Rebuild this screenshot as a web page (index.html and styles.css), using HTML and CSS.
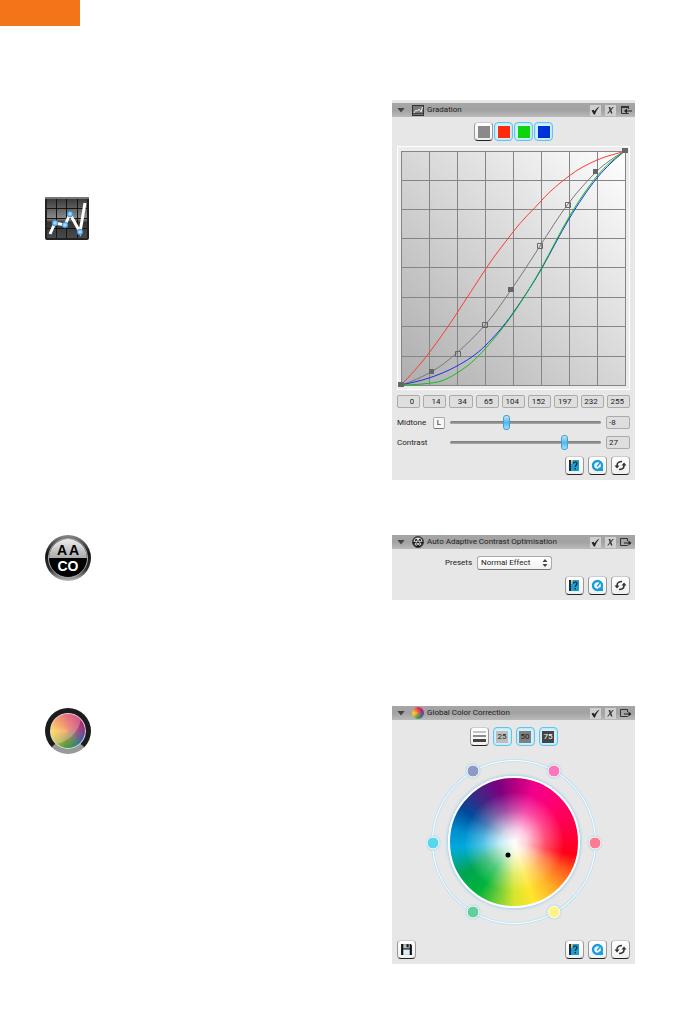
FILE: index.html
```html
<!DOCTYPE html>
<html lang="en">
<head>
<meta charset="UTF-8">
<meta name="viewport" content="width=device-width, initial-scale=1.0">
<title>Image Tools</title>
<link rel="stylesheet" href="styles.css">
</head>
<body>
<!-- shared icons -->
<svg class="sprite" aria-hidden="true">
    <defs>
        <linearGradient id="dark" x1="0" y1="0" x2="0" y2="1">
            <stop offset="0" stop-color="#3a3a3a"/>
            <stop offset=".5" stop-color="#8a8a8a"/>
            <stop offset=".6" stop-color="#333"/>
            <stop offset="1" stop-color="#4a4a4a"/>
        </linearGradient>
        <linearGradient id="rim" x1="0" y1="0" x2="0" y2="1">
            <stop offset="0" stop-color="#888"/>
            <stop offset=".4" stop-color="#111"/>
            <stop offset=".75" stop-color="#333"/>
            <stop offset="1" stop-color="#bbb"/>
        </linearGradient>
        <linearGradient id="silver" x1="0" y1="0" x2="0" y2="1">
            <stop offset="0" stop-color="#eee"/>
            <stop offset="1" stop-color="#aaa"/>
        </linearGradient>
        <radialGradient id="bead">
            <stop offset="0" stop-color="#c9eaff"/>
            <stop offset="1" stop-color="#4a9fe0"/>
        </radialGradient>
    </defs>
    <symbol id="icon-graph" viewBox="0 0 44 43">
        <rect width="44" height="43" rx="2" fill="#222"/>
        <rect x="2" y="2" width="40" height="39" fill="url(#dark)"/>
        <path d="M11.500 2V41M21.500 2V41M32.500 2V41M2 11.500H42M2 21.500H42M2 31.500H42" stroke="#151515" stroke-width="1" fill="none"/>
        <path d="M0 1H44" stroke="#777" stroke-width="2"/>
        <path d="M5 37L10 26L20 28L25 17L35 35L40 6" fill="none" stroke="#fff" stroke-width="3"/>
        <g stroke="#2d7fc4" stroke-width=".5">
            <circle cx="10" cy="26" r="3" fill="url(#bead)"/>
            <circle cx="20" cy="28" r="3" fill="url(#bead)"/>
            <circle cx="25" cy="17" r="3" fill="url(#bead)"/>
            <circle cx="35" cy="35" r="3" fill="url(#bead)"/>
        </g>
    </symbol>
    <symbol id="icon-graph-small" viewBox="0 0 12 12">
        <rect x=".5" y="1.500" width="11" height="10" fill="#777" stroke="#333"/>
        <path d="M1 9.500H11" stroke="#444"/>
        <path d="M2 9L3.500 6.500L5.500 7L7 5L9 8L10.500 3" fill="none" stroke="#e6f2fa"/>
    </symbol>
    <symbol id="icon-aaco-small" viewBox="0 0 12 12">
        <circle cx="6" cy="6" r="5.500" fill="#111" stroke="#444"/>
        <path d="M1.500 6A4.500 4.500 0 0 1 10.500 6Z" fill="#ddd"/>
        <path d="M3 5.500L4.200 3L5.400 5.500M6.600 5.500L7.800 3L9 5.500" fill="none" stroke="#111"/>
        <circle cx="4.300" cy="8" r="1.200" fill="none" stroke="#eee"/>
        <circle cx="7.700" cy="8" r="1.200" fill="none" stroke="#eee"/>
    </symbol>
    <symbol id="icon-check" viewBox="0 0 11 11">
        <path d="M1.500 5.500L3.500 4.800L4.500 6.300C5.500 4.300 7 2.800 9.500 1.500C7.500 4 6 6.500 5 9.500H3.800Z" fill="#222"/>
    </symbol>
    <symbol id="icon-cross" viewBox="0 0 11 11">
        <path d="M3.500 2H5.200L5.800 4L7.700 2H8.800L6.300 5L7.500 8.500H6L5.200 6.300L3.200 8.500H2.200L4.700 5.300Z" fill="#333"/>
    </symbol>
    <symbol id="icon-dock" viewBox="0 0 12 11">
        <path d="M8.500 4V1.500H1.500V8.500H8.500V8" fill="none" stroke="#333"/>
        <path d="M1 2H9" stroke="#333" stroke-width="2"/>
        <path d="M6 6H12" stroke="#222" stroke-width="1"/>
        <path d="M4 6L7 3.500V8.500Z" fill="#222"/>
    </symbol>
    <symbol id="icon-undock" viewBox="0 0 12 11">
        <path d="M7.500 4V1.500H.5V8.500H7.500V8" fill="none" stroke="#333"/>
        <path d="M4 6H9" stroke="#222" stroke-width="1"/>
        <path d="M11.500 6L8.500 3.500V8.500Z" fill="#222"/>
    </symbol>
    <symbol id="icon-help" viewBox="0 0 13 13">
        <rect x="2" y="1" width="9" height="11" fill="#1c9fd2"/>
        <rect x="1" y="1" width="2" height="11" fill="#1a2c40"/>
        <path d="M3 1H5L4 5H3Z" fill="#e0c050"/>
        <path d="M5.500 4.500C5.500 2.500 9 2.500 9 4.500C9 6 7.300 6 7.300 8" fill="none" stroke="#06202e" stroke-width="1.200"/>
        <rect x="6.600" y="9" width="1.400" height="1.400" fill="#06202e"/>
    </symbol>
    <symbol id="icon-movie" viewBox="0 0 13 13">
        <circle cx="6.500" cy="6.500" r="4.500" fill="#f2fbff" stroke="#1b9ddb" stroke-width="2.400"/>
        <path d="M7.500 8.500L12 9V12H7Z" fill="#1b9ddb"/>
        <path d="M6 7.500L9 4" stroke="#1b9ddb" stroke-width="1.300"/>
    </symbol>
    <symbol id="icon-reset" viewBox="0 0 13 13">
        <path d="M3 8V6.500C3 4 5 2.500 8 2.500M10 5V6.500C10 9 8 10.500 5 10.500" fill="none" stroke="#333" stroke-width="1.600"/>
        <path d="M.5 6.500H5.500L3 9.500ZM7.500 6.500H12.500L10 3.500Z" fill="#333"/>
    </symbol>
    <symbol id="icon-save" viewBox="0 0 12 12">
        <path d="M1 1H10L11 2V11H1Z" fill="#111"/>
        <rect x="3" y="1" width="6" height="4" fill="#bbb"/>
        <rect x="6" y="1" width="2" height="3" fill="#222"/>
        <rect x="3" y="6" width="6" height="5" fill="#d8f0fa"/>
    </symbol>
    <symbol id="icon-levels" viewBox="0 0 13 13">
        <path d="M0 2H13" stroke="#c4c4c4" stroke-width="2"/>
        <path d="M0 6H13" stroke="#8c8c8c" stroke-width="2"/>
        <path d="M0 10.500H13" stroke="#444" stroke-width="3"/>
    </symbol>
</svg>

<div class="page-tab"></div>
<main>
    <section class="tool tool-gradation">
        <svg class="tool-icon"><use href="#icon-graph"/></svg>
        <div class="panel">
            <header class="panel-header">
                <button class="toggle" aria-label="Collapse"></button>
                <svg class="title-icon"><use href="#icon-graph-small"/></svg>
                <h2>Gradation</h2>
                <button class="mini" aria-label="Apply"><svg><use href="#icon-check"/></svg></button>
                <button class="mini" aria-label="Cancel"><svg><use href="#icon-cross"/></svg></button>
                <button class="dock" aria-label="Dock"><svg><use href="#icon-dock"/></svg></button>
            </header>
            <div class="channels">
                <button class="btn" aria-label="All channels"><span class="swatch gray"></span></button>
                <button class="btn active" aria-label="Red"><span class="swatch red"></span></button>
                <button class="btn active" aria-label="Green"><span class="swatch green"></span></button>
                <button class="btn active" aria-label="Blue"><span class="swatch blue"></span></button>
            </div>
            <svg class="graph" viewBox="0 0 233 244">
                <defs>
                    <linearGradient id="paper" x1="0" y1="1" x2="1" y2="0">
                        <stop offset="0" stop-color="#aeaeae"/>
                        <stop offset="1" stop-color="#fff"/>
                    </linearGradient>
                </defs>
                <rect x=".5" y=".5" width="232" height="243" fill="#ececec" stroke="#fff"/>
                <rect x="4" y="5" width="224" height="234" fill="url(#paper)"/>
                <path class="grid-lines" d="M4.500 5V239M32.500 5V239M60.500 5V239M88.500 5V239M116.500 5V239M144.500 5V239M172.500 5V239M200.500 5V239M228.500 5V239M4 5.500H229M4 34.500H229M4 63.500H229M4 92.500H229M4 121.500H229M4 151.500H229M4 180.500H229M4 210.500H229M4 239.500H229"/>
                <path class="curve" stroke="#ff3b30" d="M4 239C12 231 23 219 32 207S51 181 60 167S79 138 88 124S107 98 116 86S136 64 145 54S163 37 172 30S191 18 200 14S219 8 228 5"/>
                <path class="curve" stroke="#777" d="M4 239C14 236 25 231 34 226S52 214 61 206S79 189 88 179S105 157 114 144S134 114 143 100S162 70 171 58S190 35 199 26S219 10 228 5"/>
                <path class="curve" stroke="#1535e8" d="M4 239C13 237 23 235 32 232S51 225 60 220S79 209 88 200S107 180 116 167S136 138 145 122S163 88 172 73S191 43 200 32S219 12 228 5"/>
                <path class="curve" stroke="#12bb22" d="M4 239C14 239 29 238 41 236C48 234 54 231 60 227C70 221 79 213 88 203S107 181 116 168S136 137 145 121S163 86 172 71S191 41 200 30S219 11 228 5"/>
                <path fill="#666" d="M1 236h6v5h-6zM32 223h5v5h-5zM111 141h6v5h-6zM196 23h5v5h-5zM225 2h6v5h-6z"/>
                <path fill="none" stroke="#666" d="M58.500 205.500h5v5h-5zM85.500 176.500h5v5h-5zM140.500 97.500h5v5h-5zM168.500 56.500h5v5h-5z"/>
            </svg>
            <div class="values">
                <input class="field" value="0" aria-label="Point 1">
                <input class="field" value="14" aria-label="Point 2">
                <input class="field" value="34" aria-label="Point 3">
                <input class="field" value="65" aria-label="Point 4">
                <input class="field" value="104" aria-label="Point 5">
                <input class="field" value="152" aria-label="Point 6">
                <input class="field" value="197" aria-label="Point 7">
                <input class="field" value="232" aria-label="Point 8">
                <input class="field" value="255" aria-label="Point 9">
            </div>
            <div class="sliders">
                <label for="midtone">Midtone</label>
                <button class="lum">L</button>
                <input type="range" id="midtone" min="-30" max="30" value="-8">
                <input class="field" value="-8" aria-label="Midtone value">
                <label for="contrast">Contrast</label>
                <span></span>
                <input type="range" id="contrast" min="-50" max="50" value="27">
                <input class="field" value="27" aria-label="Contrast value">
            </div>
            <footer class="actions">
                <button class="btn" aria-label="Help"><svg><use href="#icon-help"/></svg></button>
                <button class="btn" aria-label="Movie"><svg><use href="#icon-movie"/></svg></button>
                <button class="btn" aria-label="Reset"><svg><use href="#icon-reset"/></svg></button>
            </footer>
        </div>
    </section>

    <section class="tool tool-aaco">
        <svg class="tool-icon" viewBox="0 0 46 46">
            <circle cx="23" cy="23" r="23" fill="url(#rim)"/>
            <circle cx="23" cy="23" r="19.500" fill="#000" stroke="#aaa" stroke-width="1"/>
            <path d="M4 23A19 19 0 0 1 42 23Z" fill="url(#silver)"/>
            <text x="17" y="20" text-anchor="middle" class="aaco-text" fill="#000">A</text>
            <text x="29" y="20" text-anchor="middle" class="aaco-text" fill="#000">A</text>
            <text x="23" y="36" text-anchor="middle" class="aaco-text" fill="#fff">CO</text>
        </svg>
        <div class="panel">
            <header class="panel-header">
                <button class="toggle" aria-label="Collapse"></button>
                <svg class="title-icon"><use href="#icon-aaco-small"/></svg>
                <h2>Auto Adaptive Contrast Optimisation</h2>
                <button class="mini" aria-label="Apply"><svg><use href="#icon-check"/></svg></button>
                <button class="mini" aria-label="Cancel"><svg><use href="#icon-cross"/></svg></button>
                <button class="dock" aria-label="Undock"><svg><use href="#icon-undock"/></svg></button>
            </header>
            <div class="presets">
                <label for="preset">Presets</label>
                <span class="select">
                    <select id="preset">
                        <option>Normal Effect</option>
                    </select>
                    <svg class="arrows" viewBox="0 0 6 8"><path d="M3 0L5.500 3H.5ZM3 8L5.500 5H.5Z" fill="#444"/></svg>
                </span>
            </div>
            <footer class="actions">
                <button class="btn" aria-label="Help"><svg><use href="#icon-help"/></svg></button>
                <button class="btn" aria-label="Movie"><svg><use href="#icon-movie"/></svg></button>
                <button class="btn" aria-label="Reset"><svg><use href="#icon-reset"/></svg></button>
            </footer>
        </div>
    </section>

    <section class="tool tool-color">
        <div class="tool-icon color-icon"></div>
        <div class="panel">
            <header class="panel-header">
                <button class="toggle" aria-label="Collapse"></button>
                <span class="title-icon color-icon-small"></span>
                <h2>Global Color Correction</h2>
                <button class="mini" aria-label="Apply"><svg><use href="#icon-check"/></svg></button>
                <button class="mini" aria-label="Cancel"><svg><use href="#icon-cross"/></svg></button>
                <button class="dock" aria-label="Undock"><svg><use href="#icon-undock"/></svg></button>
            </header>
            <div class="ranges">
                <button class="btn" aria-label="All levels"><svg><use href="#icon-levels"/></svg></button>
                <button class="btn active"><span class="swatch light">25</span></button>
                <button class="btn active"><span class="swatch mid">50</span></button>
                <button class="btn active"><span class="swatch deep">75</span></button>
            </div>
            <div class="wheel">
                <div class="disc"></div>
                <svg class="ring" viewBox="0 0 176 176">
                    <circle cx="88" cy="88" r="81.500" fill="none" stroke="#c4e2f1" stroke-width="3"/>
                    <circle cx="88" cy="88" r="81.500" fill="none" stroke="#fff" stroke-width="1"/>
                    <g class="handles" stroke="#fff" stroke-width="1">
                        <circle cx="47" cy="17" r="6" fill="#8f99c6"/>
                        <circle cx="128" cy="17" r="6" fill="#fd77bf"/>
                        <circle cx="169" cy="89" r="6" fill="#ff7b93"/>
                        <circle cx="128" cy="158" r="6" fill="#fdf388"/>
                        <circle cx="47" cy="158" r="6" fill="#62cf9d"/>
                        <circle cx="7" cy="89" r="6" fill="#5ad5ee"/>
                    </g>
                    <circle cx="82" cy="101" r="2.500" fill="#000"/>
                </svg>
            </div>
            <footer class="actions">
                <button class="btn save" aria-label="Save"><svg><use href="#icon-save"/></svg></button>
                <button class="btn" aria-label="Help"><svg><use href="#icon-help"/></svg></button>
                <button class="btn" aria-label="Movie"><svg><use href="#icon-movie"/></svg></button>
                <button class="btn" aria-label="Reset"><svg><use href="#icon-reset"/></svg></button>
            </footer>
        </div>
    </section>
</main>
</body>
</html>
```
FILE: styles.css
```css
* {
    box-sizing: border-box;
}
body {
    margin: 0;
    background: #fff;
    color: #222;
    font-family: Roboto, "Noto Sans", sans-serif;
    font-size: 8px;
    line-height: 12px;
}
button, input, select {
    margin: 0;
    padding: 0;
    border: none;
    color: inherit;
    font: inherit;
}
svg {
    display: block;
}
.sprite {
    position: absolute;
    width: 0;
    height: 0;
}
.page-tab {
    width: 80px;
    height: 26px;
    background: #f47518;
}
main {
    padding: 74px 45px 56px;
}

/* Tool rows */
.tool {
    display: flex;
    justify-content: space-between;
    align-items: flex-start;
}
.tool-icon {
    width: 46px;
    height: 46px;
}
.tool-gradation .tool-icon {
    width: 44px;
    height: 43px;
    margin-top: 97px;
}
.tool-gradation .panel {
    padding-top: 3px;
}
.tool-aaco {
    margin-top: 55px;
}
.tool-color {
    margin-top: 106px;
}
.tool-color .tool-icon {
    margin-top: 2px;
}
.aaco-text {
    font: bold 14px "Liberation Sans", sans-serif;
}
.color-icon, .color-icon-small {
    border-radius: 50%;
    background: radial-gradient(closest-side, rgba(240, 130, 70, .8), transparent 70%),
        conic-gradient(#d83a56, #c4206c 45deg, #85378c 85deg, #4a5aa8 120deg, #2f8a72 150deg, #4f9e40 190deg, #bcb83c 230deg, #ffd03c 270deg, #f08a3c 310deg, #d83a56);
}
.color-icon {
    position: relative;
    border: 5px solid #1c1c1c;
    border-bottom-color: #999;
    background-origin: border-box;
    box-shadow: inset 0 0 0 1px #ddd;
}
/* glossy highlight */
.color-icon::after {
    content: '';
    position: absolute;
    inset: 1px;
    border-radius: 50%;
    background: radial-gradient(circle at 0 0, rgba(255, 255, 255, .25) 62%, transparent 64%);
}

/* Panels */
.panel {
    width: 243px;
    background: #e7e7e7;
}
.panel-header {
    display: flex;
    align-items: center;
    height: 14px;
    padding: 0 3px 0 5px;
    background: linear-gradient(#a6a6a6, #a2a2a2 50%, #bababa);
}
.panel-header h2 {
    flex: 1;
    margin: 0 0 0 3px;
    font-size: 8px;
    font-weight: normal;
    white-space: nowrap;
}
.toggle {
    width: 8px;
    height: 5px;
    background: #444;
    clip-path: polygon(0 0, 100% 0, 50% 100%);
}
.title-icon {
    width: 12px;
    height: 12px;
    margin-left: 7px;
}
.mini {
    width: 11px;
    height: 11px;
    margin-right: 4px;
    background: #cfcfcf;
}
.mini svg {
    width: 11px;
    height: 11px;
}
.dock {
    width: 12px;
    height: 11px;
    background: none;
}
.dock svg {
    width: 12px;
    height: 11px;
}

/* Buttons */
.btn {
    display: grid;
    place-items: center;
    width: 19px;
    height: 19px;
    border: 1px solid #999;
    border-top-color: #ccc;
    border-bottom-color: #222;
    border-radius: 4px;
    background: linear-gradient(#fff, #f0f0f0);
}
.btn svg {
    width: 13px;
    height: 13px;
}
.btn.active {
    border-color: #62c4ec;
    background: #d2f1fc;
    box-shadow: inset 0 0 2px #8fd9f5;
}
.swatch {
    display: block;
    width: 12px;
    height: 12px;
    line-height: 12px;
    text-align: center;
}
.gray { background: #8a8a8a; }
.red { background: #ff2a0c; }
.green { background: #0bd60b; }
.blue { background: #0030d8; }
.light { background: #bdbdbd; }
.mid { background: #808080; }
.deep { background: #444; color: #fff; }
.channels, .ranges {
    display: flex;
    justify-content: center;
}
.channels {
    gap: 1px;
    padding: 5px 0;
}
.ranges {
    gap: 4px;
    padding: 7px 0 8px;
}
.actions {
    display: flex;
    justify-content: flex-end;
    gap: 4px;
    padding: 5px;
}
.save {
    margin-right: auto;
}

/* Gradation */
.graph {
    width: calc(100% - 10px);
    margin: 0 5px;
}
.grid-lines {
    fill: none;
    stroke: #858585;
}
.curve {
    fill: none;
    stroke-width: 1;
}
.field {
    width: 100%;
    height: 13px;
    padding: 0 5px 0 2px;
    border: 1px solid #aaa;
    border-radius: 2px;
    background: #dedede;
    text-align: right;
}
.values {
    display: grid;
    grid-template-columns: repeat(9, 1fr);
    gap: 3px;
    padding: 5px;
}
.sliders {
    display: grid;
    grid-template-columns: 31px 12px 1fr 24px;
    align-items: center;
    column-gap: 5px;
    row-gap: 7px;
    padding: 3px 5px 2px;
}
.sliders .field {
    text-align: left;
}
.lum {
    height: 12px;
    border: 1px solid #aaa;
    border-bottom-color: #777;
    border-radius: 2px;
    background: #f6f6f6;
    line-height: 10px;
}
input[type="range"] {
    appearance: none;
    width: 100%;
    height: 13px;
    background: none;
}
input[type="range"]::-webkit-slider-runnable-track {
    height: 3px;
    border-radius: 2px;
    background: linear-gradient(#777, #aaa);
}
input[type="range"]::-webkit-slider-thumb {
    appearance: none;
    width: 7px;
    height: 15px;
    margin-top: -6px;
    border: 1px solid #4a9cc8;
    border-radius: 3px;
    background: linear-gradient(#bfe9fc, #4fb9ee 50%, #9be4ff);
}

/* Presets */
.presets {
    display: flex;
    align-items: center;
    justify-content: center;
    gap: 5px;
    padding: 7px 30px 1px 0;
}
.select {
    position: relative;
}
.select select {
    appearance: none;
    display: block;
    width: 75px;
    height: 14px;
    padding: 0 14px 0 3px;
    border: 1px solid #aaa;
    border-bottom-color: #777;
    border-radius: 3px;
    background: linear-gradient(#fff, #f2f2f2);
}
.arrows {
    position: absolute;
    top: 3px;
    right: 4px;
    width: 6px;
    height: 8px;
}

/* Color wheel */
.wheel {
    position: relative;
    display: grid;
    place-items: center;
    width: 176px;
    height: 176px;
    margin: 0 auto 5px;
}
.disc {
    width: 132px;
    height: 132px;
    border: 2px solid #fff;
    border-radius: 50%;
    background: radial-gradient(closest-side, #fff, rgba(255, 255, 255, .8) 20%, rgba(255, 255, 255, .3) 50%, transparent 78%),
        conic-gradient(#b0007f, #f0008c 20deg, #ff0073 45deg, #ff0038 85deg, #ff0018 102deg, #ff5a1e 118deg, #ffb428 142deg, #ffe62d 162deg, #d5e52c 180deg, #5cc83a 200deg, #00b43c 215deg, #00a550 238deg, #00a8b0 255deg, #00aadc 265deg, #0090d0 280deg, #004a9b 302deg, #3a2a85 320deg, #7d0080 345deg, #b0007f);
    box-shadow: 0 0 3px 1px #9fd0ea;
}
.ring {
    position: absolute;
    inset: 0;
}
.handles {
    filter: drop-shadow(0 0 1px #7fc4e6);
}
```
